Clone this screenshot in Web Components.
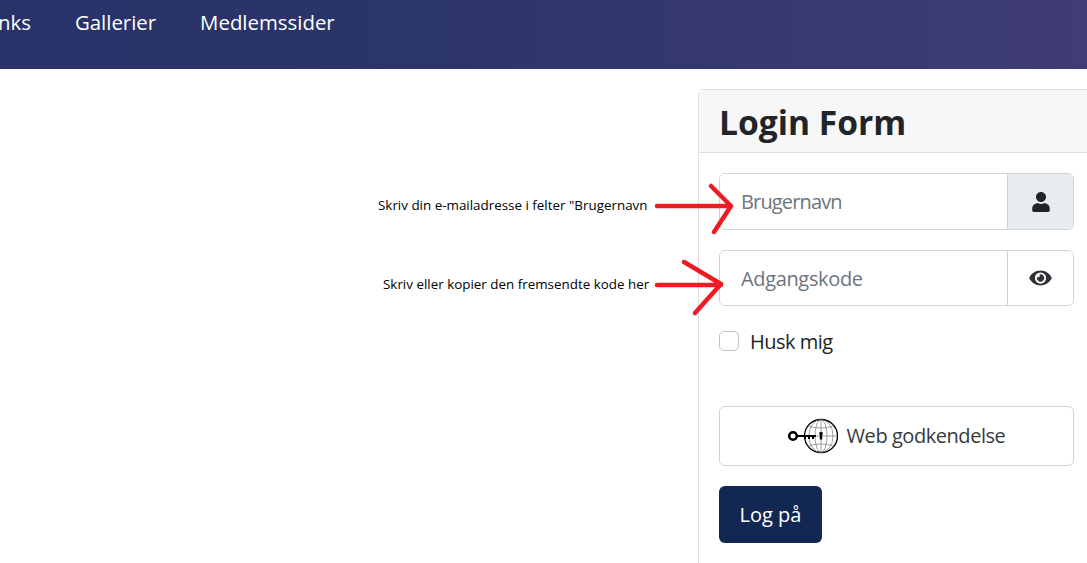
<!DOCTYPE html>
<html lang="da">
<head>
<meta charset="utf-8">
<title>Login Form</title>
<style>
  html, body { margin: 0; height: 563px; overflow: hidden; background: #fff; }
  body { font-family: "Open Sans", "Noto Sans", sans-serif; position: relative; }
</style>
</head>
<body>
<site-nav>
  <a>nks</a>
  <a>Gallerier</a>
  <a>Medlemssider</a>
</site-nav>
<login-layout>
  <login-card title-text="Login Form">
    <login-input placeholder="Brugernavn" icon="user" shaded style="--ls:-.85px"></login-input>
    <login-input placeholder="Adgangskode" icon="eye" style="--ls:-.35px;height:56px"></login-input>
    <check-row>Husk mig</check-row>
    <web-auth-button>Web godkendelse</web-auth-button>
    <submit-button>Log på</submit-button>
  </login-card>
</login-layout>
<screen-notes></screen-notes>

<script>
class SiteNav extends HTMLElement {
  constructor() {
    super();
    this.attachShadow({ mode: 'open' }).innerHTML = `
      <style>
        :host {
          display: flex;
          align-items: flex-start;
          gap: 44px;
          box-sizing: border-box;
          height: 69px;
          margin-left: -2px;
          padding: 8px 0 0 0;
          overflow: hidden;
          background: linear-gradient(90deg, #29336a 0%, #2c3568 40%, #403c75 100%);
          color: #fff;
          font-size: 20.4px;
          line-height: 28px;
        }
      </style>
      <slot></slot>`;
  }
}
customElements.define('site-nav', SiteNav);

class LoginLayout extends HTMLElement {
  constructor() {
    super();
    this.attachShadow({ mode: 'open' }).innerHTML = `
      <style>
        :host { display: block; height: 494px; overflow: hidden; padding: 20px 0 0 698px; }
      </style>
      <slot></slot>`;
  }
}
customElements.define('login-layout', LoginLayout);

class LoginCard extends HTMLElement {
  constructor() {
    super();
    this.attachShadow({ mode: 'open' }).innerHTML = `
      <style>
        :host {
          display: block;
          width: 389px;
          height: 474px;
          box-sizing: border-box;
          border: solid #dfdfe3;
          border-width: 1px 0 0 1px;
          border-radius: 5px 0 0 0;
        }
        header {
          height: 63px;
          box-sizing: border-box;
          padding: 9px 0 0 20px;
          background: #f7f7f7;
          border-bottom: 1px solid #dfdfe3;
          color: #212529;
          font-size: 33.6px;
          line-height: 46px;
          font-weight: 700;
        }
        .body { padding: 20px 0 0 20px; width: 355px; }
      </style>
      <header></header>
      <div class="body"><slot></slot></div>`;
    this.shadowRoot.querySelector('header').textContent = this.getAttribute('title-text');
  }
}
customElements.define('login-card', LoginCard);

const ICONS = {
  user: `<svg width="18" height="20" viewBox="0 0 448 512" fill="#212529"><path d="M224 256c70.700 0 128-57.300 128-128S294.700 0 224 0 96 57.300 96 128s57.300 128 128 128zm89.600 32h-16.700c-22.200 10.200-46.900 16-72.900 16s-50.600-5.800-72.900-16h-16.700C60.200 288 0 348.200 0 422.400V464c0 26.500 21.500 48 48 48h352c26.500 0 48-21.500 48-48v-41.600c0-74.200-60.200-134.400-134.400-134.400z"/></svg>`,
  eye: `<svg width="23" height="20" viewBox="0 0 576 512" fill="#2f3338"><path d="M572.520 241.400C518.290 135.590 410.930 64 288 64S57.680 135.640 3.480 241.410a32.350 32.350 0 0 0 0 29.190C57.710 376.410 165.070 448 288 448s230.320-71.640 284.520-177.410a32.350 32.350 0 0 0 0-29.190zM288 400a144 144 0 1 1 144-144 143.930 143.930 0 0 1-144 144zm0-240a95.310 95.310 0 0 0-25.310 3.790 47.850 47.850 0 0 1-66.900 66.900A95.780 95.780 0 1 0 288 160z"/></svg>`
};

class LoginInput extends HTMLElement {
  constructor() {
    super();
    this.attachShadow({ mode: 'open' }).innerHTML = `
      <style>
        :host {
          display: flex;
          box-sizing: border-box;
          height: 57px;
          margin-bottom: 20px;
          border: 1px solid #ced4da;
          border-radius: 6px;
          overflow: hidden;
          font-size: 20px;
        }
        input {
          flex: 1;
          min-width: 0;
          border: 0;
          outline: 0;
          padding: 0 21px;
          background: #fff;
          font: inherit;
          letter-spacing: var(--ls, 0);
        }
        input::placeholder { color: #6c757d; opacity: 1; }
        .addon {
          flex: none;
          box-sizing: border-box;
          width: 66px;
          display: flex;
          align-items: center;
          justify-content: center;
          border-left: 1px solid #ced4da;
          background: #fff;
        }
        :host([shaded]) .addon { background: #e9ecef; }
      </style>
      <input type="text">
      <span class="addon"></span>`;
    this.shadowRoot.querySelector('input').placeholder = this.getAttribute('placeholder');
    this.shadowRoot.querySelector('.addon').innerHTML = ICONS[this.getAttribute('icon')];
  }
}
customElements.define('login-input', LoginInput);

class CheckRow extends HTMLElement {
  constructor() {
    super();
    this.attachShadow({ mode: 'open' }).innerHTML = `
      <style>
        :host {
          display: flex;
          align-items: center;
          gap: 11px;
          height: 30px;
          color: #212529;
          font-size: 20px;
          letter-spacing: -.5px;
        }
        i {
          display: block;
          box-sizing: border-box;
          width: 20px;
          height: 20px;
          border: 1px solid #bfc4c9;
          border-radius: 5px;
          background: #fff;
        }
      </style>
      <i></i><slot></slot>`;
  }
}
customElements.define('check-row', CheckRow);

class WebAuthButton extends HTMLElement {
  constructor() {
    super();
    this.attachShadow({ mode: 'open' }).innerHTML = `
      <style>
        :host {
          display: flex;
          align-items: center;
          justify-content: center;
          gap: 9px;
          box-sizing: border-box;
          height: 60px;
          margin-top: 50px;
          border: 1px solid #ced4da;
          border-radius: 6px;
          color: #343a40;
          font-size: 20px;
          letter-spacing: -.45px;
        }
        span { position: relative; top: -1px; }
      </style>
      <svg width="50" height="36" viewBox="0 0 50 36" fill="none" stroke="#000">
        <circle cx="33" cy="18" r="16.500" stroke-width="1.300"/>
        <ellipse cx="33" cy="18" rx="6" ry="16.500" stroke="#666" stroke-width=".6"/>
        <ellipse cx="33" cy="18" rx="12" ry="16.500" stroke="#666" stroke-width=".6"/>
        <path d="M33 1.500v33M16.500 18h33" stroke="#666" stroke-width=".6"/>
        <path d="M20 8q13 4 26 0M20 28q13-4 26 0" stroke="#666" stroke-width=".6"/>
        <circle cx="5" cy="18" r="3.800" stroke-width="2.600"/>
        <path d="M9 18h19M17 18v3M21 18v3M25 18v3" stroke-width="2"/>
        <circle cx="33" cy="15.500" r="1.800" fill="#000" stroke="none"/>
        <path d="M33 15.500v6" stroke-width="2.400"/>
      </svg>
      <span><slot></slot></span>`;
  }
}
customElements.define('web-auth-button', WebAuthButton);

class SubmitButton extends HTMLElement {
  constructor() {
    super();
    this.attachShadow({ mode: 'open' }).innerHTML = `
      <style>
        :host {
          display: flex;
          align-items: center;
          justify-content: center;
          width: 103px;
          height: 57px;
          margin-top: 20px;
          border-radius: 6px;
          background: #122853;
          color: #fff;
          font-size: 20px;
        }
      </style>
      <slot></slot>`;
  }
}
customElements.define('submit-button', SubmitButton);

// the hand-drawn notes that lie on top of the screenshot
class ScreenNotes extends HTMLElement {
  constructor() {
    super();
    this.attachShadow({ mode: 'open' }).innerHTML = `
      <style>
        :host { position: absolute; inset: 0; display: block; pointer-events: none; }
        span {
          position: absolute;
          color: #000;
          font: 13.4px/18px "Open Sans", "Noto Sans", sans-serif;
          white-space: nowrap;
        }
        svg { position: absolute; left: 0; top: 0; }
      </style>
      <span style="left:378px;top:196px">Skriv din e-mailadresse i felter "Brugernavn</span>
      <span style="left:383px;top:275px">Skriv eller kopier den fremsendte kode her</span>
      <svg width="1087" height="563" fill="none" stroke="#ed1c24" stroke-width="4.500" stroke-linecap="round" stroke-linejoin="round">
        <path d="M657 206h74M711 186l20 20-17 26"/>
        <path d="M657 285h64M684 262l37 22-26 29"/>
      </svg>`;
  }
}
customElements.define('screen-notes', ScreenNotes);
</script>
</body>
</html>
